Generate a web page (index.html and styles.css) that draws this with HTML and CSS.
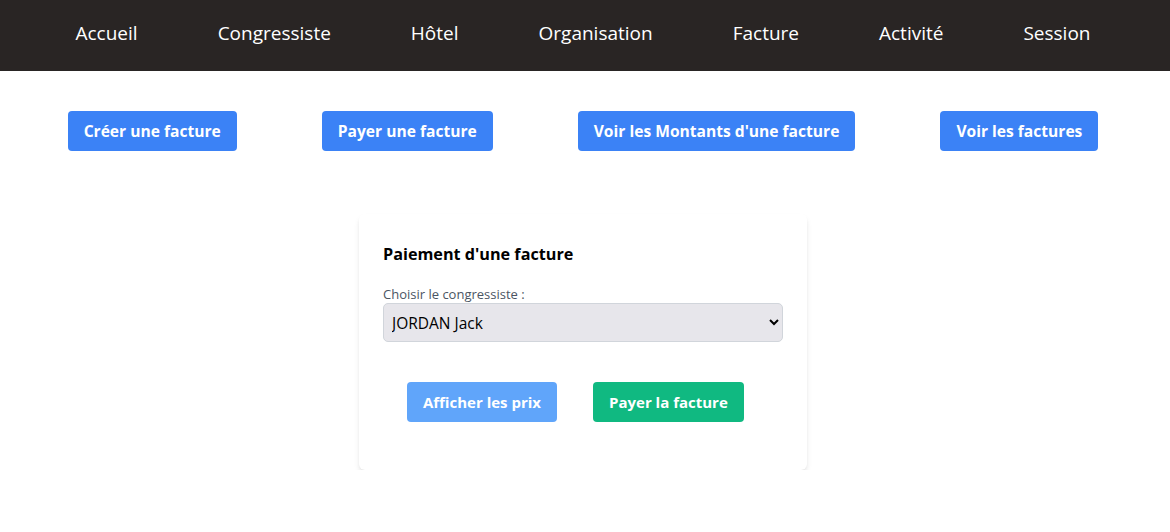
FILE: index.html
```html
<!DOCTYPE html>
<html lang="fr">
<head>
<meta charset="utf-8">
<title>Facture</title>
<link rel="stylesheet" href="styles.css">
</head>
<body>
<nav class="nav">
  <a class="nav-item" href="#">Accueil</a>
  <a class="nav-item" href="#">Congressiste</a>
  <a class="nav-item" href="#">Hôtel</a>
  <a class="nav-item" href="#">Organisation</a>
  <a class="nav-item" href="#">Facture</a>
  <a class="nav-item" href="#">Activité</a>
  <a class="nav-item" href="#">Session</a>
</nav>
<div class="actions">
  <button class="btn btn-blue">Créer une facture</button>
  <button class="btn btn-blue">Payer une facture</button>
  <button class="btn btn-blue">Voir les Montants d'une facture</button>
  <button class="btn btn-blue">Voir les factures</button>
</div>
<main class="main">
  <section class="card">
    <h2 class="card-title">Paiement d'une facture</h2>
    <label class="label" for="cg">Choisir le congressiste :</label>
    <select id="cg" class="select">
      <option>JORDAN Jack</option>
    </select>
    <div class="card-actions">
      <button class="btn btn-light">Afficher les prix</button>
      <button class="btn btn-green">Payer la facture</button>
    </div>
  </section>
</main>
</body>
</html>
```

FILE: styles.css
```css
* { box-sizing: border-box; }
body {
  margin: 0;
  padding-right: 4px;
  font-family: "Open Sans", "Noto Sans", sans-serif;
  background: #fff;
  color: #000;
}
.nav {
  height: 71px;
  margin-right: -4px;
  padding-right: 4px;
  background: #292524;
  display: flex;
  align-items: center;
  justify-content: center;
  gap: 80px;
  padding-bottom: 6px;
}
.nav-item {
  color: #fff;
  text-decoration: none;
  font-size: 19px;
}
.actions {
  display: flex;
  justify-content: center;
  gap: 85px;
  margin-top: 40px;
}
.btn {
  border: none;
  border-radius: 4px;
  color: #fff;
  font-family: "Open Sans", sans-serif;
  font-weight: 700;
  font-size: 15.6px;
  height: 40px;
  padding: 0 16px;
  cursor: pointer;
}
.btn-blue { background: #3b82f6; }
.btn-light { background: #60a5fa; }
.btn-green { background: #10b981; }
.main {
  display: flex;
  justify-content: center;
  margin-top: 63px;
}
.card {
  width: 448px;
  background: #fff;
  border-radius: 6px;
  box-shadow: 0 4px 6px -1px rgba(0,0,0,0.1), 0 2px 4px -2px rgba(0,0,0,0.1);
  padding: 26px 24px 48px;
}
.card-title {
  margin: 0 0 17px;
  font-size: 16.2px;
  font-weight: 700;
  line-height: 28px;
}
.label {
  display: block;
  font-size: 13px;
  color: #4b5563;
  line-height: 18px;
}
.select {
  display: block;
  width: 100%;
  height: 39px;
  font-family: "Open Sans", sans-serif;
  font-size: 15.5px;
  color: #000;
  background: #e7e6eb;
  border: 1px solid #d1d5db;
  border-radius: 5px;
  padding: 0 4px;
}
.card-actions {
  display: flex;
  gap: 36px;
  padding-left: 24px;
  margin-top: 40px;
}
.card-actions .btn { font-size: 15px; }
```
